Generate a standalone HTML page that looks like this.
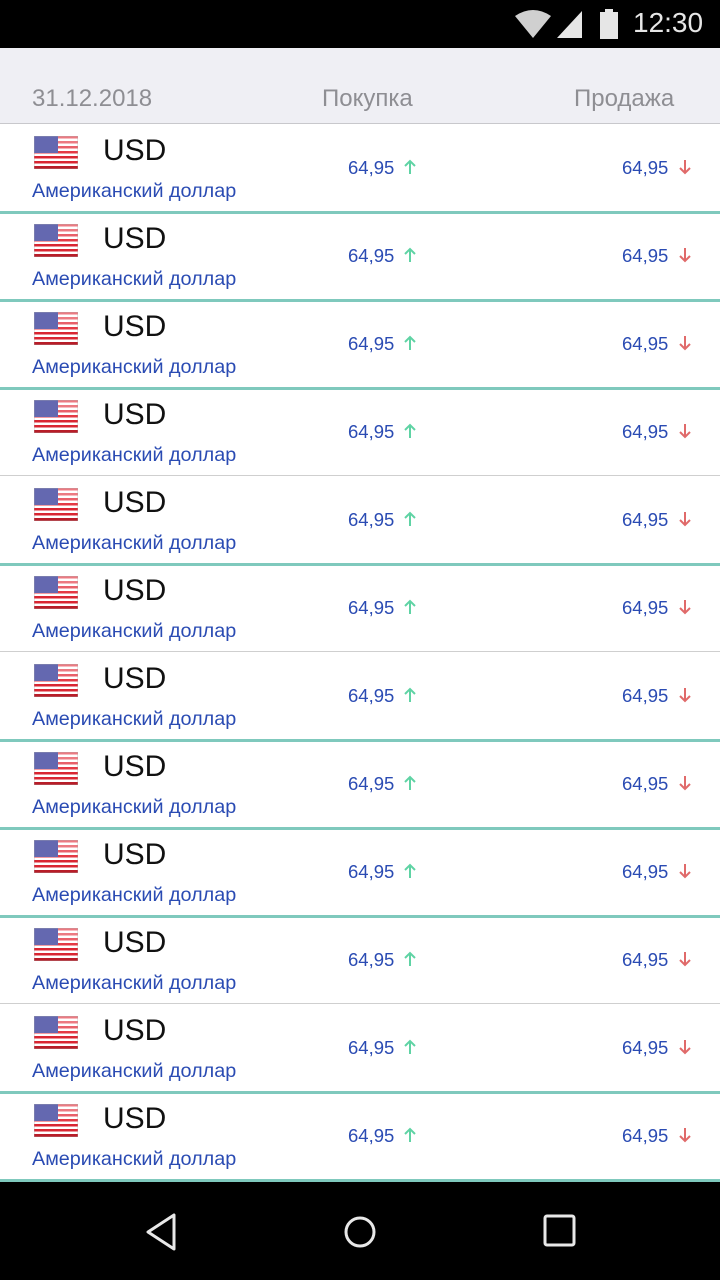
<!DOCTYPE html>
<html><head><meta charset="utf-8"><style>
*{margin:0;padding:0;box-sizing:border-box}
body{width:720px;height:1280px;position:relative;background:#fff;font-family:"Liberation Sans","DejaVu Sans",sans-serif;overflow:hidden}
.sb{position:absolute;left:0;top:0;width:720px;height:48px;background:#000}
.hd{position:absolute;left:0;top:48px;width:720px;height:76px;background:#efeff4;border-bottom:1px solid #c8c8cc}
.hd span{position:absolute;top:37px;font-size:24px;color:#8e8e93}
.row{position:absolute;left:0;width:720px;height:88px}
.flag{position:absolute;left:34px;top:12px;width:44px;height:33px}
.cur{position:absolute;left:103px;top:10px;font-size:30px;color:#111}
.nm{position:absolute;left:32px;top:56px;font-size:19.8px;color:#2a4bb3}
.v{position:absolute;top:33px;font-size:18.5px;color:#2a4bb3}
.up{position:absolute;left:403px;top:35px}
.dn{position:absolute;left:678px;top:35px}
.sep{position:absolute;left:0;width:720px}
.t{height:3px;background:#7fc9bd;top:87px}
.g{height:1px;background:#cfcfcf;top:87px}
.nav{position:absolute;left:0;top:1182px;width:720px;height:98px;background:#000}
</style></head><body>
<div class="sb">
<svg style="position:absolute;left:514px;top:10px" width="38" height="28"><path d="M1 6 Q19 -6 37 6 L19 28 Z" fill="#d0d0d0"/></svg>
<svg style="position:absolute;left:556px;top:10px" width="26" height="28"><path d="M26 1 L26 28 L1 28 Z" fill="#e6e6e6"/></svg>
<svg style="position:absolute;left:600px;top:9px" width="18" height="30"><rect x="5" y="0" width="8" height="3" fill="#e6e6e6"/><rect x="0" y="3" width="18" height="27" fill="#e6e6e6"/></svg>
<div style="position:absolute;left:633px;top:7px;font-size:28px;color:#e6e6e6">12:30</div>
</div>
<div class="hd"><span style="left:32px">31.12.2018</span><span style="left:322px">Покупка</span><span style="left:574px">Продажа</span></div>

<svg width="0" height="0" style="position:absolute"><defs>
<symbol id="fl" viewBox="0 0 44 33">
<rect width="44" height="33" fill="#fff"/>
<rect y="0" width="44" height="2.5" fill="#ec7a82"/><rect y="5" width="44" height="2.5" fill="#ec7a82"/><rect y="10" width="44" height="2.5" fill="#e8606a"/><rect y="15" width="44" height="2.5" fill="#e43a45"/><rect y="20" width="44" height="2.5" fill="#d92632"/><rect y="25" width="44" height="2.5" fill="#d92632"/><rect y="30" width="44" height="3" fill="#b81d28"/>
<rect width="24" height="17" fill="#6468b0"/>
<rect width="44" height="33" fill="none" stroke="#aaa" stroke-width=".6"/>
</symbol>
<symbol id="ua" viewBox="0 0 14 16"><path d="M7 15 V2 M2 7 L7 2 L12 7" stroke="#5fd3a4" stroke-width="2" fill="none"/></symbol>
<symbol id="da" viewBox="0 0 14 16"><path d="M7 1 V14 M2 9 L7 14 L12 9" stroke="#e06a6a" stroke-width="2" fill="none"/></symbol>
</defs></svg>

<div class="row" style="top:124px"><svg class="flag"><use href="#fl"/></svg><div class="cur">USD</div><div class="nm">Американский доллар</div><div class="v" style="left:348px">64,95</div><svg class="up" width="14" height="16"><use href="#ua"/></svg><div class="v" style="left:622px">64,95</div><svg class="dn" width="14" height="16"><use href="#da"/></svg><div class="sep t"></div></div>
<div class="row" style="top:212px"><svg class="flag"><use href="#fl"/></svg><div class="cur">USD</div><div class="nm">Американский доллар</div><div class="v" style="left:348px">64,95</div><svg class="up" width="14" height="16"><use href="#ua"/></svg><div class="v" style="left:622px">64,95</div><svg class="dn" width="14" height="16"><use href="#da"/></svg><div class="sep t"></div></div>
<div class="row" style="top:300px"><svg class="flag"><use href="#fl"/></svg><div class="cur">USD</div><div class="nm">Американский доллар</div><div class="v" style="left:348px">64,95</div><svg class="up" width="14" height="16"><use href="#ua"/></svg><div class="v" style="left:622px">64,95</div><svg class="dn" width="14" height="16"><use href="#da"/></svg><div class="sep t"></div></div>
<div class="row" style="top:388px"><svg class="flag"><use href="#fl"/></svg><div class="cur">USD</div><div class="nm">Американский доллар</div><div class="v" style="left:348px">64,95</div><svg class="up" width="14" height="16"><use href="#ua"/></svg><div class="v" style="left:622px">64,95</div><svg class="dn" width="14" height="16"><use href="#da"/></svg><div class="sep g"></div></div>
<div class="row" style="top:476px"><svg class="flag"><use href="#fl"/></svg><div class="cur">USD</div><div class="nm">Американский доллар</div><div class="v" style="left:348px">64,95</div><svg class="up" width="14" height="16"><use href="#ua"/></svg><div class="v" style="left:622px">64,95</div><svg class="dn" width="14" height="16"><use href="#da"/></svg><div class="sep t"></div></div>
<div class="row" style="top:564px"><svg class="flag"><use href="#fl"/></svg><div class="cur">USD</div><div class="nm">Американский доллар</div><div class="v" style="left:348px">64,95</div><svg class="up" width="14" height="16"><use href="#ua"/></svg><div class="v" style="left:622px">64,95</div><svg class="dn" width="14" height="16"><use href="#da"/></svg><div class="sep g"></div></div>
<div class="row" style="top:652px"><svg class="flag"><use href="#fl"/></svg><div class="cur">USD</div><div class="nm">Американский доллар</div><div class="v" style="left:348px">64,95</div><svg class="up" width="14" height="16"><use href="#ua"/></svg><div class="v" style="left:622px">64,95</div><svg class="dn" width="14" height="16"><use href="#da"/></svg><div class="sep t"></div></div>
<div class="row" style="top:740px"><svg class="flag"><use href="#fl"/></svg><div class="cur">USD</div><div class="nm">Американский доллар</div><div class="v" style="left:348px">64,95</div><svg class="up" width="14" height="16"><use href="#ua"/></svg><div class="v" style="left:622px">64,95</div><svg class="dn" width="14" height="16"><use href="#da"/></svg><div class="sep t"></div></div>
<div class="row" style="top:828px"><svg class="flag"><use href="#fl"/></svg><div class="cur">USD</div><div class="nm">Американский доллар</div><div class="v" style="left:348px">64,95</div><svg class="up" width="14" height="16"><use href="#ua"/></svg><div class="v" style="left:622px">64,95</div><svg class="dn" width="14" height="16"><use href="#da"/></svg><div class="sep t"></div></div>
<div class="row" style="top:916px"><svg class="flag"><use href="#fl"/></svg><div class="cur">USD</div><div class="nm">Американский доллар</div><div class="v" style="left:348px">64,95</div><svg class="up" width="14" height="16"><use href="#ua"/></svg><div class="v" style="left:622px">64,95</div><svg class="dn" width="14" height="16"><use href="#da"/></svg><div class="sep g"></div></div>
<div class="row" style="top:1004px"><svg class="flag"><use href="#fl"/></svg><div class="cur">USD</div><div class="nm">Американский доллар</div><div class="v" style="left:348px">64,95</div><svg class="up" width="14" height="16"><use href="#ua"/></svg><div class="v" style="left:622px">64,95</div><svg class="dn" width="14" height="16"><use href="#da"/></svg><div class="sep t"></div></div>
<div class="row" style="top:1092px"><svg class="flag"><use href="#fl"/></svg><div class="cur">USD</div><div class="nm">Американский доллар</div><div class="v" style="left:348px">64,95</div><svg class="up" width="14" height="16"><use href="#ua"/></svg><div class="v" style="left:622px">64,95</div><svg class="dn" width="14" height="16"><use href="#da"/></svg><div class="sep t"></div></div>

<div class="nav">
<svg style="position:absolute;left:140px;top:28px" width="40" height="44"><path d="M34 5 L34 39 L8 22 Z" fill="none" stroke="#e8e8e8" stroke-width="3" stroke-linejoin="round"/></svg>
<svg style="position:absolute;left:340px;top:30px" width="40" height="40"><circle cx="20" cy="20" r="14" fill="none" stroke="#e8e8e8" stroke-width="3"/></svg>
<svg style="position:absolute;left:542px;top:31px" width="36" height="36"><rect x="3" y="3" width="29" height="29" rx="2" fill="none" stroke="#e8e8e8" stroke-width="3"/></svg>
</div>
</body></html>
